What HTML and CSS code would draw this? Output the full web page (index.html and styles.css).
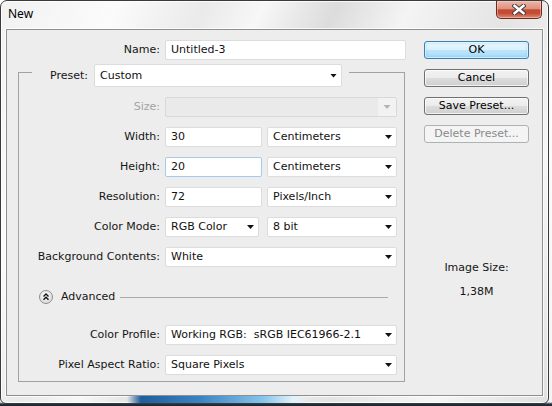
FILE: index.html
```html
<!DOCTYPE html>
<html>
<head>
<meta charset="utf-8">
<title>New</title>
<link rel="stylesheet" href="styles.css">
</head>
<body>
<div class="window">
  <div class="titlebar">
    <span class="title">New</span>
    <div class="close">
      <svg width="14" height="11" viewBox="0 0 14 11">
        <path d="M2.5 1.8 L11.5 9.2 M11.5 1.8 L2.5 9.2" stroke="#3d3d3d" stroke-width="4.4" stroke-linecap="square" fill="none"/>
        <path d="M2.5 1.8 L11.5 9.2 M11.5 1.8 L2.5 9.2" stroke="#ffffff" stroke-width="2.4" stroke-linecap="square" fill="none"/>
      </svg>
    </div>
  </div>
  <div class="client">
    <div class="form">
      <div class="row name-row">
        <span class="lbl">Name:</span>
        <div class="field w-name">Untitled-3</div>
      </div>
      <div class="group">
        <div class="legend">
          <span class="legend-lbl">Preset:</span>
          <div class="field select preset">Custom<i class="arrow"></i></div>
        </div>
        <div class="row">
          <span class="lbl muted">Size:</span>
          <div class="field w-full off"><span class="dd"><i class="arrow grey"></i></span></div>
        </div>
        <div class="row">
          <span class="lbl">Width:</span>
          <div class="field w-num">30</div>
          <div class="field select w-unit">Centimeters<i class="arrow"></i></div>
        </div>
        <div class="row">
          <span class="lbl">Height:</span>
          <div class="field w-num focus">20</div>
          <div class="field select w-unit">Centimeters<i class="arrow"></i></div>
        </div>
        <div class="row">
          <span class="lbl">Resolution:</span>
          <div class="field w-num">72</div>
          <div class="field select w-unit">Pixels/Inch<i class="arrow"></i></div>
        </div>
        <div class="row">
          <span class="lbl">Color Mode:</span>
          <div class="field select w-mode">RGB Color<i class="arrow"></i></div>
          <div class="field select w-unit shift">8 bit<i class="arrow"></i></div>
        </div>
        <div class="row">
          <span class="lbl">Background Contents:</span>
          <div class="field select w-full">White<i class="arrow"></i></div>
        </div>
        <div class="adv">
          <svg class="adv-icon" width="14" height="14" viewBox="0 0 14 14">
            <defs>
              <radialGradient id="g" cx="0.45" cy="0.35" r="0.7">
                <stop offset="0" stop-color="#ffffff"/>
                <stop offset="1" stop-color="#d6d6d6"/>
              </radialGradient>
            </defs>
            <circle cx="7" cy="7" r="6.5" fill="url(#g)" stroke="#8e8e8e"/>
            <polyline points="4.5,6.6 7,4.1 9.5,6.6" fill="none" stroke="#111" stroke-width="1.4"/>
            <polyline points="4.5,9.8 7,7.3 9.5,9.8" fill="none" stroke="#111" stroke-width="1.4"/>
          </svg>
          <span class="adv-text">Advanced</span>
          <span class="adv-line"></span>
        </div>
        <div class="row after-adv">
          <span class="lbl">Color Profile:</span>
          <div class="field select w-full">Working RGB:&nbsp; sRGB IEC61966-2.1<i class="arrow"></i></div>
        </div>
        <div class="row">
          <span class="lbl">Pixel Aspect Ratio:</span>
          <div class="field select w-full">Square Pixels<i class="arrow"></i></div>
        </div>
      </div>
    </div>
    <div class="side">
      <div class="btn default">OK</div>
      <div class="btn">Cancel</div>
      <div class="btn">Save Preset...</div>
      <div class="btn disabled">Delete Preset...</div>
      <div class="imgsize">Image Size:</div>
      <div class="imgval">1,38M</div>
    </div>
  </div>
  <div class="frame-bottom"></div>
</div>
</body>
</html>
```
FILE: styles.css
```css
html, body {
  margin: 0;
  padding: 0;
}
body {
  width: 552px;
  height: 406px;
  overflow: hidden;
  background: linear-gradient(to bottom, #ffffff 0, #f4f4f4 402px, #26323f 404px, #1b2530 406px);
  font-family: "DejaVu Sans", sans-serif;
  font-size: 11px;
  color: #151515;
}
.window {
  width: 549px;
  height: 404px;
  box-sizing: border-box;
  border: 1px solid #3a3a3a;
  border-radius: 7px 7px 6px 6px;
  padding: 0 5px;
  display: flex;
  flex-direction: column;
  background: linear-gradient(115deg, #f1f1f1 0%, #fbfbfb 16%, #eaeaea 28%, #f7f7f7 36%, #dcdcdc 46%, #f4f4f4 56%, #e4e4e4 70%, #f6f6f6 84%, #e0e0e0 100%);
  box-shadow: inset 0 0 0 1px rgba(255, 255, 255, 0.8);
}
.titlebar {
  height: 28px;
  flex: none;
  display: flex;
  align-items: flex-start;
}
.title {
  font-family: "Noto Sans", sans-serif;
  font-size: 12px;
  line-height: 16px;
  color: #000;
  padding: 5px 0 0 2px;
}
.close {
  margin-left: auto;
  margin-right: 1px;
  width: 46px;
  height: 18px;
  box-sizing: border-box;
  border: 1px solid #6a2a1f;
  border-top: none;
  border-radius: 0 0 5px 5px;
  background: linear-gradient(to bottom, #ecb7aa 0%, #de9280 45%, #c64a31 52%, #c34c35 72%, #de8c76 100%);
  box-shadow: inset 0 0 0 1px rgba(255, 220, 210, 0.45);
  display: flex;
  align-items: center;
  justify-content: center;
}
.client {
  flex: 1;
  box-sizing: border-box;
  border: 1px solid #8f8f8f;
  background: #ededed;
  display: flex;
  padding-top: 10px;
  box-shadow: 0 0 0 1px rgba(255, 255, 255, 0.75);
}
.frame-bottom {
  height: 7px;
  flex: none;
  margin: 0 -5px;
  border-radius: 0 0 5px 5px;
  background: linear-gradient(90deg, rgba(255,255,255,0) 0, rgba(255,255,255,0) 126px, #1f5e9c 140px, #3b84c4 200px, #86c4ec 262px, #e2f1fb 292px, rgba(255,255,255,0) 312px);
}
.form {
  width: 399px;
  flex: none;
}
.row {
  display: flex;
  align-items: center;
  gap: 5px;
  height: 20px;
  margin-top: 10px;
}
.name-row {
  margin-top: 0;
}
.lbl {
  text-align: right;
  line-height: 20px;
  white-space: nowrap;
  flex: none;
  width: 141px;
}
.name-row .lbl {
  width: 153px;
}
.muted {
  color: #a3a3a3;
}
.field {
  height: 20px;
  box-sizing: border-box;
  background: #ffffff;
  border: 1px solid #dcdcdc;
  border-radius: 2px;
  padding: 0 4px 0 5px;
  display: flex;
  align-items: center;
  line-height: 18px;
  white-space: nowrap;
  flex: none;
  color: #111;
}
.focus {
  border-color: #a9c9ea;
}
.w-name { width: 241px; }
.w-full { width: 232px; }
.w-num { width: 97px; }
.w-unit { width: 130px; }
.w-mode { width: 94px; }
.shift { margin-left: 3px; }
.arrow {
  margin-left: auto;
  width: 7px;
  height: 4px;
  background: #111;
  clip-path: polygon(0 0, 100% 0, 50% 100%);
  flex: none;
}
.arrow.grey {
  background: #b4b4b4;
  margin: 0 auto;
}
.off {
  background: #eaeaea;
  border-color: #d8d8d8;
  padding: 0;
  justify-content: flex-end;
}
.dd {
  width: 18px;
  height: 18px;
  background: #f2f2f2;
  display: flex;
  align-items: center;
}
.group {
  margin: 12px 0 0 11px;
  width: 387px;
  box-sizing: border-box;
  border: 1px solid #a2a2a2;
  padding: 0 6px 6px 0;
}
.legend {
  display: flex;
  align-items: center;
  width: max-content;
  height: 23px;
  margin: -9px 0 0 13px;
  padding: 0 7px 0 18px;
  background: #ededed;
}
.legend-lbl {
  width: 44px;
  line-height: 23px;
}
.preset {
  width: 248px;
  height: 23px;
  line-height: 21px;
}
.adv {
  display: flex;
  align-items: center;
  height: 20px;
  margin-top: 20px;
  padding-left: 20px;
}
.adv-icon {
  flex: none;
  display: block;
}
.adv-text {
  margin-left: 8px;
  line-height: 20px;
}
.adv-line {
  flex: 1;
  height: 0;
  border-top: 1px solid #a9a9a9;
  margin: 0 10px 0 5px;
}
.after-adv {
  margin-top: 18px;
}
.side {
  margin-left: 18px;
  width: 105px;
  flex: none;
  display: flex;
  flex-direction: column;
  padding-top: 1px;
}
.btn {
  height: 18px;
  box-sizing: border-box;
  border: 1px solid #707070;
  border-radius: 3px;
  background: linear-gradient(to bottom, #f3f3f3 0%, #ebebeb 50%, #dddddd 50%, #cfcfcf 100%);
  box-shadow: inset 0 0 0 1px rgba(255, 255, 255, 0.7);
  text-align: center;
  line-height: 16px;
  margin-bottom: 10px;
  color: #000;
}
.btn.default {
  border-color: #3c7fb1;
  background: linear-gradient(to bottom, #eaf6fd 0%, #d9f0fc 50%, #bee6fd 50%, #a7d9f5 100%);
  box-shadow: inset 0 0 0 1px rgba(255, 255, 255, 0.6), inset 0 0 2px 1px rgba(72, 200, 250, 0.5);
}
.btn.disabled {
  border-color: #adb2b5;
  background: #f4f4f4;
  color: #8a8a8a;
  box-shadow: none;
}
.imgsize {
  margin-top: 108px;
  text-align: center;
  line-height: 13px;
}
.imgval {
  margin-top: 11px;
  text-align: center;
  line-height: 13px;
}
```
